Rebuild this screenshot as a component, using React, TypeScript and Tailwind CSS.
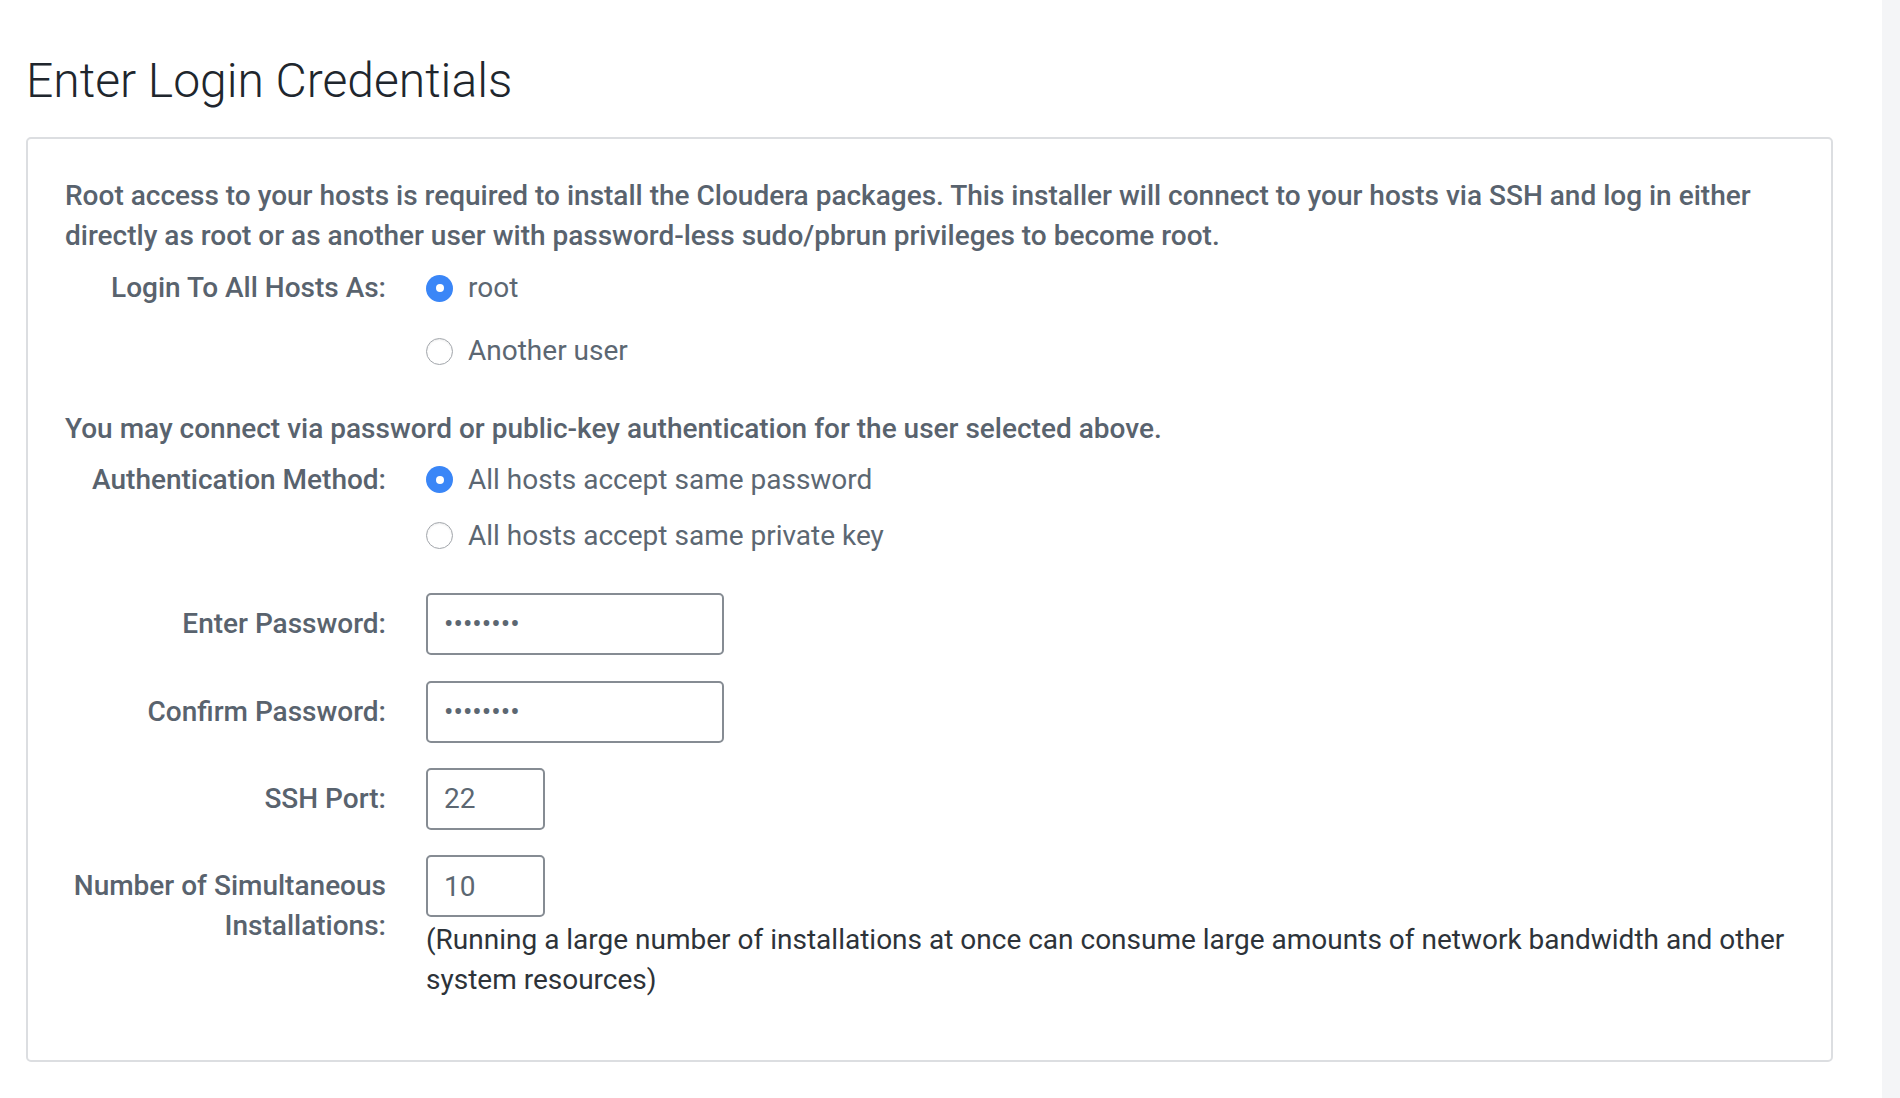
import { useState } from "react";

const labelCls = "w-[321px] shrink-0 text-right font-medium text-[#59636e]";

function Radio({ checked }: { checked: boolean }) {
  if (checked) {
    return (
      <span className="flex h-[27px] w-[27px] shrink-0 items-center justify-center rounded-full bg-[#3a86f7]">
        <span className="h-[8px] w-[8px] rounded-full bg-white" />
      </span>
    );
  }
  return (
    <span className="h-[27px] w-[27px] shrink-0 rounded-full border-[1.5px] border-[#a2a6ab] bg-white shadow-[inset_0_1px_2px_rgba(0,0,0,0.08)]" />
  );
}

interface OptionProps {
  label: string;
  checked: boolean;
  onSelect: () => void;
}

function Option({ label, checked, onSelect }: OptionProps) {
  return (
    <button
      type="button"
      onClick={onSelect}
      className="flex items-center gap-[15px] text-left text-[#5c6772]"
    >
      <Radio checked={checked} />
      <span>{label}</span>
    </button>
  );
}

export default function App() {
  const [loginAs, setLoginAs] = useState<"root" | "other">("root");
  const [authMethod, setAuthMethod] = useState<"password" | "key">("password");

  const inputCls =
    "h-[62px] rounded-[5px] border-2 border-[#868c93] bg-white px-[16px] text-[28px] text-[#5c6772] outline-none";

  return (
    <div className="flex min-h-screen bg-white font-[Roboto,sans-serif] text-[28px] leading-[40px]">
      <div className="flex-1 pl-[26px] pr-[49px] pt-[53px]">
        <h1 className="mb-[28px] text-[48px] font-light leading-[56px] text-[#20262d]">
          Enter Login Credentials
        </h1>

        <div className="rounded-[5px] border-2 border-[#dcdee1] px-[37px] pb-[60px] pt-[37px]">
          <p className="font-medium text-[#59636e]">
            Root access to your hosts is required to install the Cloudera packages. This installer
            will connect to your hosts via SSH and log in either directly as root or as another user
            with password-less sudo/pbrun privileges to become root.
          </p>

          <div className="mt-[12px] flex gap-[40px]">
            <div className={labelCls}>Login To All Hosts As:</div>
            <div className="flex flex-col gap-[23px]">
              <Option label="root" checked={loginAs === "root"} onSelect={() => setLoginAs("root")} />
              <Option
                label="Another user"
                checked={loginAs === "other"}
                onSelect={() => setLoginAs("other")}
              />
            </div>
          </div>

          <p className="mt-[37.5px] font-medium text-[#59636e]">
            You may connect via password or public-key authentication for the user selected above.
          </p>

          <div className="mt-[11px] flex gap-[40px]">
            <div className={labelCls}>Authentication Method:</div>
            <div className="flex flex-col gap-[16px]">
              <Option
                label="All hosts accept same password"
                checked={authMethod === "password"}
                onSelect={() => setAuthMethod("password")}
              />
              <Option
                label="All hosts accept same private key"
                checked={authMethod === "key"}
                onSelect={() => setAuthMethod("key")}
              />
            </div>
          </div>

          <div className="mt-[37px] flex gap-[40px]">
            <label className={`${labelCls} pt-[11px]`}>Enter Password:</label>
            <input type="password" defaultValue="cloudera" className={`${inputCls} w-[298px]`} />
          </div>

          <div className="mt-[26px] flex gap-[40px]">
            <label className={`${labelCls} pt-[11px]`}>Confirm Password:</label>
            <input type="password" defaultValue="cloudera" className={`${inputCls} w-[298px]`} />
          </div>

          <div className="mt-[25px] flex gap-[40px]">
            <label className={`${labelCls} pt-[11px]`}>SSH Port:</label>
            <input type="text" defaultValue="22" className={`${inputCls} w-[119px]`} />
          </div>

          <div className="mt-[25.5px] flex gap-[40px]">
            <label className={`${labelCls} pt-[11px]`}>Number of Simultaneous Installations:</label>
            <div className="flex flex-1 flex-col">
              <input type="text" defaultValue="10" className={`${inputCls} w-[119px]`} />
              <p className="mt-[3px] text-[#2d3339]">
                (Running a large number of installations at once can consume large amounts of network
                bandwidth and other system resources)
              </p>
            </div>
          </div>
        </div>
      </div>
      <div className="w-[18px] shrink-0 bg-[#f4f5f7]" />
    </div>
  );
}
